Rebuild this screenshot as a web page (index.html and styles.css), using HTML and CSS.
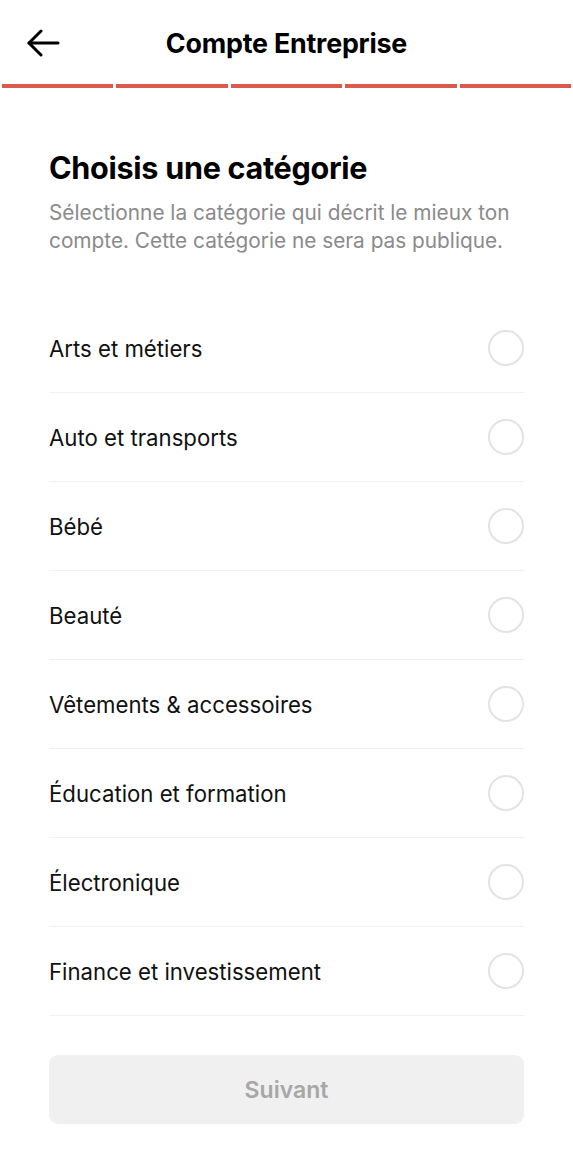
FILE: index.html
```html
<!DOCTYPE html>
<html lang="fr">
<head>
  <meta charset="UTF-8" />
  <meta name="viewport" content="width=device-width, initial-scale=1.0"/>
  <title>Compte Entreprise</title>
  <link rel="stylesheet" href="styles.css">
</head>
<body>
  <div class="screen">
    <header class="topbar">
      <button class="back" aria-label="Retour">
        <svg width="34" height="28" viewBox="0 0 34 28" fill="none" stroke="#000" stroke-width="3" stroke-linecap="round" stroke-linejoin="round">
          <path d="M32 14H3"/>
          <path d="M15 2L3 14l12 12"/>
        </svg>
      </button>
      <h1 class="title">Compte Entreprise</h1>
    </header>

    <div class="progress">
      <span></span><span></span><span></span><span></span><span></span>
    </div>

    <main class="content">
      <h2 class="heading">Choisis une catégorie</h2>
      <p class="subtitle">Sélectionne la catégorie qui décrit le mieux ton compte. Cette catégorie ne sera pas publique.</p>

      <ul class="list">
        <li class="row"><span>Arts et métiers</span><i class="radio"></i></li>
        <li class="row"><span>Auto et transports</span><i class="radio"></i></li>
        <li class="row"><span>Bébé</span><i class="radio"></i></li>
        <li class="row"><span>Beauté</span><i class="radio"></i></li>
        <li class="row"><span>Vêtements &amp; accessoires</span><i class="radio"></i></li>
        <li class="row"><span>Éducation et formation</span><i class="radio"></i></li>
        <li class="row"><span>Électronique</span><i class="radio"></i></li>
        <li class="row"><span>Finance et investissement</span><i class="radio"></i></li>
      </ul>

      <button class="next" disabled>Suivant</button>
    </main>
  </div>
</body>
</html>
```

FILE: styles.css
```css
body {
  margin: 0;
  background: #fff;
  font-family: Inter, "Noto Sans", Arial, sans-serif;
  color: #111;
}

.screen {
  width: 573px;
  min-height: 1158px;
}

/* Header */
.topbar {
  position: relative;
  height: 84px;
  display: flex;
  align-items: center;
  justify-content: center;
}

.back {
  position: absolute;
  left: 26px;
  top: 29px;
  padding: 0;
  border: 0;
  background: none;
  display: flex;
}

.title {
  margin: 0;
  font-size: 26.8px;
  font-weight: 700;
  letter-spacing: -0.2px;
  color: #000;
  transform: translateY(1px);
}

.progress {
  display: flex;
  gap: 3px;
  padding: 0 2px;
}

.progress span {
  flex: 1;
  height: 4px;
  background: #dc5a4b;
}

/* Content */
.content {
  padding: 60px 49px 0;
}

.heading {
  margin: 0;
  font-size: 30.6px;
  font-weight: 700;
  letter-spacing: -0.3px;
  color: #000;
  line-height: 40px;
}

.subtitle {
  margin: 11px 0 0;
  font-size: 20.8px;
  line-height: 28px;
  color: #8a8a8a;
}

.list {
  list-style: none;
  margin: 49px 0 0;
  padding: 0;
}

.row {
  display: flex;
  align-items: center;
  justify-content: space-between;
  height: 88px;
  border-bottom: 1px solid #f1f1f1;
  font-size: 22.2px;
  color: #111;
}

.radio {
  width: 32px;
  height: 32px;
  border: 2px solid #e3e3e3;
  border-radius: 50%;
}

.next {
  display: block;
  width: 100%;
  height: 69px;
  margin-top: 39px;
  border: 0;
  border-radius: 9px;
  background: #f0f0f0;
  color: #a7a7a7;
  font-family: inherit;
  font-size: 23px;
  font-weight: 600;
}
```
